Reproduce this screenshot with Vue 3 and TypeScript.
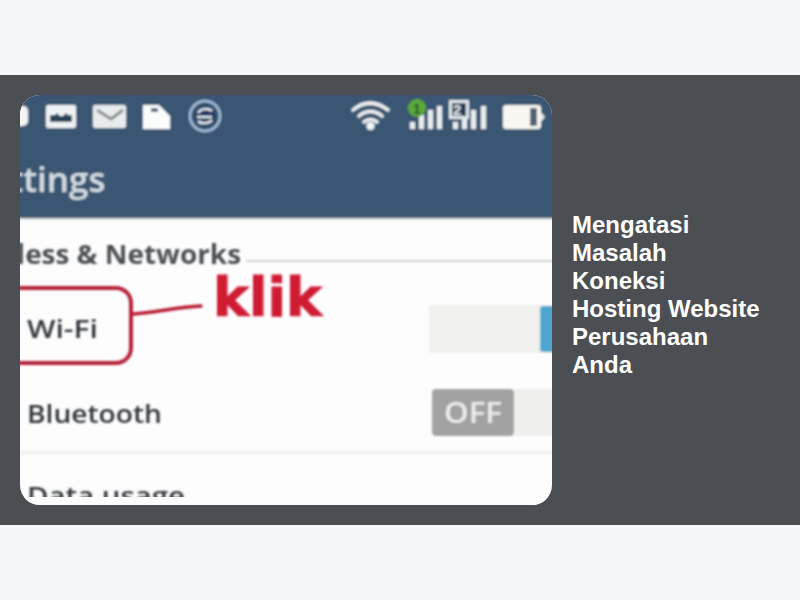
<script setup lang="ts">
const title: string = 'Mengatasi Masalah Koneksi Hosting Website Perusahaan Anda'
const bars = [
  [410, 122, 5, 7], [419, 115, 5, 14], [428, 110, 5, 19], [437, 106, 5, 23],
  [453, 122, 5, 7], [462, 115, 5, 14], [471, 110, 5, 19], [481, 106, 5, 23],
]
</script>

<template>
  <main class="page">
    <section class="banner">
      <div class="photo">
        <svg class="shot" viewBox="20 95 532 410" width="532" height="410" role="img" aria-label="Pengaturan Wi-Fi pada ponsel">
          <defs>
            <filter id="soft" filterUnits="userSpaceOnUse" x="0" y="80" width="570" height="440"><feGaussianBlur stdDeviation="1.1" /></filter>
          </defs>
          <rect x="20" y="95" width="532" height="410" fill="#fdfdfd" />
          <g filter="url(#soft)">
            <rect x="10" y="85" width="552" height="132" fill="#3a5672" />
            <rect x="10" y="216" width="552" height="2" fill="#3e4f5e" />
            <rect x="10" y="218" width="552" height="2" fill="#d5dbde" />

            <!-- status bar, left -->
            <rect x="14" y="106" width="14" height="20" rx="5" fill="#f2f4f5" />
            <rect x="46" y="105" width="30" height="23" rx="2" fill="#eef2f4" />
            <path d="M50 122v-7h5l2-2 3 3h3l3-3 2 2h4v7z" fill="#2c425a" />
            <rect x="93" y="105" width="33" height="23" rx="2" fill="#e8ecee" />
            <path d="M97 110l14 9 12-9" fill="none" stroke="#8a8f8c" stroke-width="3" />
            <path d="M143 105h16l11 11v13h-27z" fill="#fbfcfc" />
            <rect x="151" y="108" width="7" height="4" fill="#52677d" />
            <circle cx="205" cy="116" r="15" fill="none" stroke="#a9c0df" stroke-width="2.500" />
            <circle cx="205" cy="116" r="10.500" fill="#1f3658" />
            <path d="M198 113c3-5 11-5 14-2M212 120c-3 4-11 4-14 1M197 117h15" fill="none" stroke="#dfe8f2" stroke-width="2.500" />

            <!-- status bar, right -->
            <g fill="none" stroke="#eef2f4" stroke-linecap="round" stroke-width="3.500">
              <path d="M353 110c11-9 23-9 35 0" />
              <path d="M359 116c7-6 16-6 23 0" />
              <path d="M364 122c4-3 9-3 13 0" />
            </g>
            <circle cx="370.500" cy="126" r="4" fill="#f4f6f7" />
            <rect v-for="(b, i) in bars" :key="i" :x="b[0]" :y="b[1]" :width="b[2]" :height="b[3]" fill="#e8edf0" />
            <circle cx="417" cy="108" r="9" fill="#5aa838" />
            <text x="413" y="114" class="sim-one">1</text>
            <rect x="449" y="100" width="20" height="19" fill="#dfe5ea" />
            <rect x="452" y="103" width="14" height="13" fill="#2a3d55" />
            <text x="453" y="115" class="sim">2</text>
            <rect x="503" y="105" width="38" height="24" rx="3" fill="#f8f7f2" />
            <rect x="530" y="108" width="7" height="18" fill="#55646f" />
            <path d="M540 111l5 6-5 6z" fill="#e7ebee" />

            <text x="-30" y="192" class="appbar">Settings</text>
            <text x="-48" y="264" class="section" textLength="289" lengthAdjust="spacingAndGlyphs">Wireless &amp; Networks</text>
            <rect x="246" y="260" width="310" height="2" fill="#cfd2d4" />

            <text x="27" y="338" class="row" textLength="71" lengthAdjust="spacingAndGlyphs">Wi-Fi</text>
            <rect x="-30" y="288" width="161" height="75" rx="15" fill="none" stroke="#b5213a" stroke-width="4" />
            <path d="M133 314c20-1 45-7 68-8" fill="none" stroke="#b81c36" stroke-width="3.500" stroke-linecap="round" />
            <text x="213" y="316" class="klik">klik</text>

            <rect x="429" y="305" width="130" height="48" rx="3" fill="#f0f0ee" />
            <rect x="540" y="306" width="20" height="46" rx="3" fill="#4ea6d0" />

            <text x="27" y="423" class="row" textLength="135" lengthAdjust="spacingAndGlyphs">Bluetooth</text>
            <rect x="514" y="389" width="44" height="47" fill="#efefed" />
            <rect x="432" y="389" width="82" height="47" rx="4" fill="#a2a2a2" />
            <text x="444" y="423" class="off" textLength="58" lengthAdjust="spacingAndGlyphs">OFF</text>

            <rect x="10" y="451" width="552" height="3" fill="#efefef" />
            <text x="27" y="505" class="row" textLength="158" lengthAdjust="spacingAndGlyphs">Data usage</text>
          </g>
          <rect x="20" y="497" width="532" height="8" fill="#fdfdfd" />
        </svg>
      </div>
      <h1 class="title">{{ title }}</h1>
    </section>
  </main>
</template>

<style>
html, body { margin: 0; background: #f5f6f8; }
</style>

<style scoped>
.page {
  height: 600px;
  display: flex;
  align-items: center;
  font-family: "Liberation Sans", Arial, sans-serif;
}
.banner {
  width: 100%;
  box-sizing: border-box;
  padding: 20px;
  display: flex;
  align-items: center;
  gap: 20px;
  background: #4b4f54;
}
.photo {
  flex: none;
  width: 532px;
  height: 410px;
  border-radius: 20px;
  overflow: hidden;
}
.shot { display: block; }
.title {
  margin: 0 0 10px;
  width: 188px;
  color: #fff;
  font-size: 24px;
  line-height: 28px;
  font-weight: 700;
}
.appbar { font: 600 35px "Open Sans", sans-serif; fill: #d5dde4; }
.section { font: 700 26px "Open Sans", sans-serif; fill: #4c5154; }
.row { font: 600 26px "Open Sans", sans-serif; fill: #35393c; }
.klik { font: 700 54px "DejaVu Sans", sans-serif; fill: #cf1a32; stroke: #cf1a32; stroke-width: 1px; }
.off { font: 600 28px "Open Sans", sans-serif; fill: #ececec; }
.sim { font: 700 15px "Liberation Sans", sans-serif; fill: #e6ebef; }
.sim-one { font: 700 14px "Liberation Sans", sans-serif; fill: #24502a; }
</style>
